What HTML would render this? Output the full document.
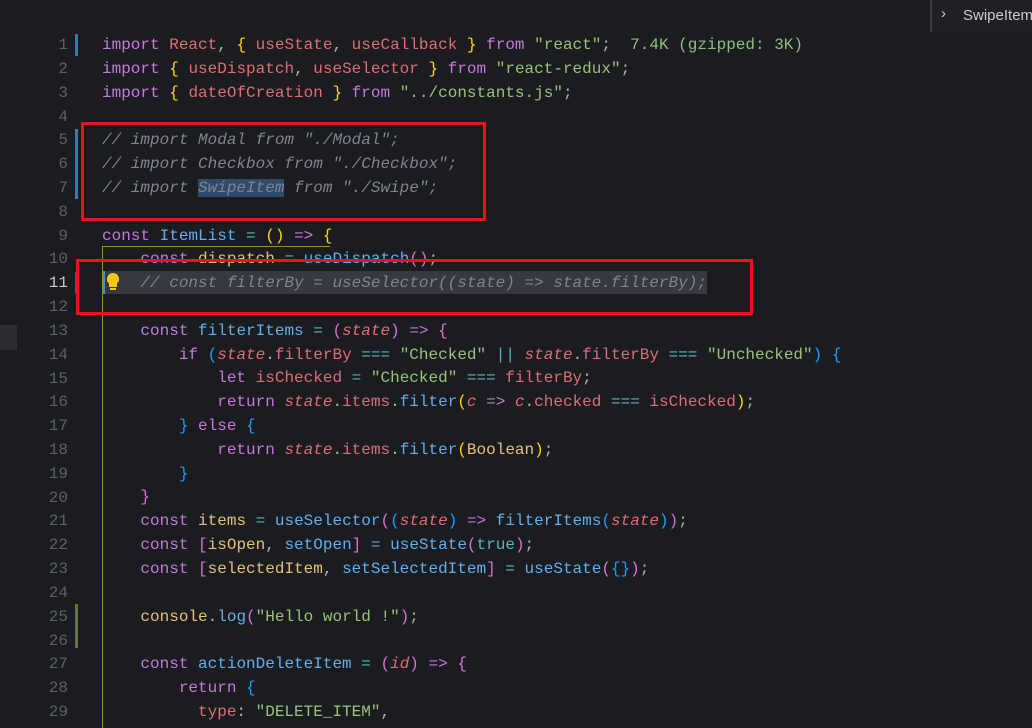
<!DOCTYPE html>
<html><head><meta charset="utf-8"><style>
body{margin:0;width:1032px;height:728px;background:#1b1c20;overflow:hidden;position:relative;font-family:"Liberation Mono",monospace;font-size:16px}
.ln{position:absolute;left:0;width:68px;text-align:right;color:#5c6068;height:23.82px;line-height:23.82px;margin-top:2px}
.code{position:absolute;left:102px;top:34px;white-space:pre;line-height:23.82px;color:#abb2bf}
.k{color:#c678dd}.v{color:#e06c75}.f{color:#61afef}.s{color:#98c379}.c{color:#7f848e;font-style:italic}.o{color:#56b6c2}.y{color:#e5c07b}.b1{color:#ffd700}.b2{color:#da70d6}.b3{color:#179fff}.i{font-style:italic;color:#e06c75}
.bar{position:absolute;left:75px;width:3px}
</style></head><body>
<div style="position:absolute;left:0;top:325px;width:17px;height:25px;background:#2b2d33"></div>
<div style="position:absolute;left:930px;top:0;width:102px;height:32px;background:#1e2024;border-left:2px solid #3a3c42"></div>
<div style="position:absolute;left:941px;top:5px;color:#ccc;font-family:'Liberation Sans',sans-serif;font-size:15px">›</div>
<div style="position:absolute;left:963px;top:7px;color:#ccc;font-family:'Liberation Sans',sans-serif;font-size:15px">SwipeItem</div>
<div class="bar" style="top:34px;height:22px;background:#1b8aaa"></div>
<div class="bar" style="top:129px;height:70px;background:#1b8aaa"></div>
<div class="bar" style="top:272px;height:22px;left:75px;width:2px;background:#555"></div>
<div class="bar" style="top:604px;height:44px;background:#5e7a1a"></div>
<div style="position:absolute;left:102px;top:246px;width:228px;height:1px;background:#9a8a30"></div>
<div style="position:absolute;left:102px;top:246px;width:1px;height:482px;background:#9a8a30"></div>
<div style="position:absolute;left:103px;top:271px;width:604px;height:23px;background:#363940"></div>
<div style="position:absolute;left:103px;top:271px;width:2px;height:23px;background:#3b8fd8"></div>
<svg style="position:absolute;left:105px;top:272px" width="16" height="20" viewBox="0 0 16 20"><path d="M8 1a6 6 0 0 0-4 10.5V15h8v-3.5A6 6 0 0 0 8 1z" fill="#f5c518"/><rect x="5" y="16" width="6" height="2" fill="#f5c518"/></svg>
<div class="ln" style="top:32px">1</div><div class="ln" style="top:55.8px">2</div><div class="ln" style="top:79.6px">3</div><div class="ln" style="top:103.5px">4</div><div class="ln" style="top:127.3px">5</div><div class="ln" style="top:151.1px">6</div><div class="ln" style="top:174.9px">7</div><div class="ln" style="top:198.7px">8</div><div class="ln" style="top:222.6px">9</div><div class="ln" style="top:246.4px">10</div><div class="ln" style="top:270.2px;color:#c8c8c8">11</div><div class="ln" style="top:294px">12</div><div class="ln" style="top:317.8px">13</div><div class="ln" style="top:341.7px">14</div><div class="ln" style="top:365.5px">15</div><div class="ln" style="top:389.3px">16</div><div class="ln" style="top:413.1px">17</div><div class="ln" style="top:436.9px">18</div><div class="ln" style="top:460.8px">19</div><div class="ln" style="top:484.6px">20</div><div class="ln" style="top:508.4px">21</div><div class="ln" style="top:532.2px">22</div><div class="ln" style="top:556px">23</div><div class="ln" style="top:579.9px">24</div><div class="ln" style="top:603.7px">25</div><div class="ln" style="top:627.5px">26</div><div class="ln" style="top:651.3px">27</div><div class="ln" style="top:675.1px">28</div><div class="ln" style="top:699px">29</div>
<div class="code"><span class="k">import</span> <span class="v">React</span>, <span class="b1">{</span> <span class="v">useState</span>, <span class="v">useCallback</span> <span class="b1">}</span> <span class="k">from</span> <span class="s">"react"</span>;  <span style="color:#8fbf7f">7.4K (gzipped: 3K)</span>
<span class="k">import</span> <span class="b1">{</span> <span class="v">useDispatch</span>, <span class="v">useSelector</span> <span class="b1">}</span> <span class="k">from</span> <span class="s">"react-redux"</span>;
<span class="k">import</span> <span class="b1">{</span> <span class="v">dateOfCreation</span> <span class="b1">}</span> <span class="k">from</span> <span class="s">"../constants.js"</span>;

<span class="c">// import Modal from "./Modal";</span>
<span class="c">// import Checkbox from "./Checkbox";</span>
<span class="c">// import <span style="background:#2f4a6a">SwipeItem</span> from "./Swipe";</span>

<span class="k">const</span> <span class="f">ItemList</span> <span class="o">=</span> <span class="b1">()</span> <span class="k">=&gt;</span> <span class="b1">{</span>
    <span class="k">const</span> <span class="y">dispatch</span> <span class="o">=</span> <span class="f">useDispatch</span><span class="b2">()</span>;
    <span class="c">// const filterBy = useSelector((state) =&gt; state.filterBy);</span>

    <span class="k">const</span> <span class="f">filterItems</span> <span class="o">=</span> <span class="b2">(</span><span class="i">state</span><span class="b2">)</span> <span class="k">=&gt;</span> <span class="b2">{</span>
        <span class="k">if</span> <span class="b3">(</span><span class="i">state</span>.<span class="v">filterBy</span> <span class="o">===</span> <span class="s">"Checked"</span> <span class="o">||</span> <span class="i">state</span>.<span class="v">filterBy</span> <span class="o">===</span> <span class="s">"Unchecked"</span><span class="b3">)</span> <span class="b3">{</span>
            <span class="k">let</span> <span class="v">isChecked</span> <span class="o">=</span> <span class="s">"Checked"</span> <span class="o">===</span> <span class="v">filterBy</span>;
            <span class="k">return</span> <span class="i">state</span>.<span class="v">items</span>.<span class="f">filter</span><span class="b1">(</span><span class="i">c</span> <span class="k">=&gt;</span> <span class="i">c</span>.<span class="v">checked</span> <span class="o">===</span> <span class="v">isChecked</span><span class="b1">)</span>;
        <span class="b3">}</span> <span class="k">else</span> <span class="b3">{</span>
            <span class="k">return</span> <span class="i">state</span>.<span class="v">items</span>.<span class="f">filter</span><span class="b1">(</span><span class="y">Boolean</span><span class="b1">)</span>;
        <span class="b3">}</span>
    <span class="b2">}</span>
    <span class="k">const</span> <span class="y">items</span> <span class="o">=</span> <span class="f">useSelector</span><span class="b2">(</span><span class="b3">(</span><span class="i">state</span><span class="b3">)</span> <span class="k">=&gt;</span> <span class="f">filterItems</span><span class="b3">(</span><span class="i">state</span><span class="b3">)</span><span class="b2">)</span>;
    <span class="k">const</span> <span class="b2">[</span><span class="y">isOpen</span>, <span class="f">setOpen</span><span class="b2">]</span> <span class="o">=</span> <span class="f">useState</span><span class="b2">(</span><span class="o">true</span><span class="b2">)</span>;
    <span class="k">const</span> <span class="b2">[</span><span class="y">selectedItem</span>, <span class="f">setSelectedItem</span><span class="b2">]</span> <span class="o">=</span> <span class="f">useState</span><span class="b2">(</span><span class="b3">{}</span><span class="b2">)</span>;

    <span class="y">console</span>.<span class="f">log</span><span class="b2">(</span><span class="s">"Hello world !"</span><span class="b2">)</span>;

    <span class="k">const</span> <span class="f">actionDeleteItem</span> <span class="o">=</span> <span class="b2">(</span><span class="i">id</span><span class="b2">)</span> <span class="k">=&gt;</span> <span class="b2">{</span>
        <span class="k">return</span> <span class="b3">{</span>
          <span class="v">type</span>: <span class="s">"DELETE_ITEM"</span>,
</div>
<div style="position:absolute;left:81px;top:122px;width:399px;height:93px;border:3px solid #e8141c"></div>
<div style="position:absolute;left:76px;top:259px;width:671px;height:50px;border:3px solid #e8141c"></div>
</body></html>
